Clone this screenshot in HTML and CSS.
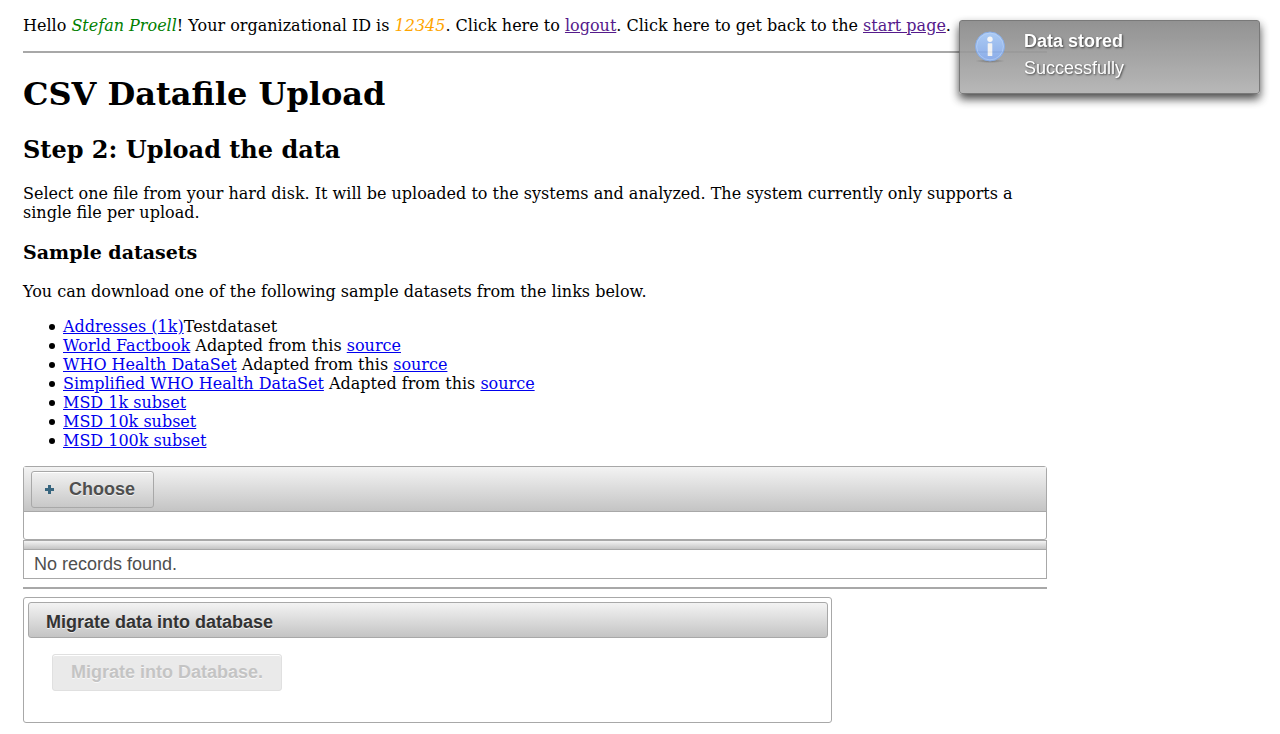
FILE: index.html
```html
<!DOCTYPE html>
<html lang="en">
<head>
<meta charset="utf-8">
<title>CSV Datafile Upload</title>
<link rel="stylesheet" href="styles.css">
</head>
<body>
<main class="content">
  <p class="greeting">Hello <em class="user-name">Stefan Proell</em>! Your organizational ID is <em class="org-id">12345</em>. Click here to <a class="visited" href="#logout">logout</a>. Click here to get back to the <a class="visited" href="#start">start page</a>.</p>
  <hr class="rule">
  <h1 class="title">CSV Datafile Upload</h1>
  <h2 class="step">Step 2: Upload the data</h2>
  <p class="text">Select one file from your hard disk. It will be uploaded to the systems and analyzed. The system currently only supports a single file per upload.</p>
  <h3 class="subtitle">Sample datasets</h3>
  <p class="text">You can download one of the following sample datasets from the links below.</p>
  <ul class="datasets">
    <li><a href="#addresses">Addresses (1k)</a>Testdataset</li>
    <li><a href="#factbook">World Factbook</a> Adapted from this <a href="#factbook-source">source</a></li>
    <li><a href="#who">WHO Health DataSet</a> Adapted from this <a href="#who-source">source</a></li>
    <li><a href="#who-simple">Simplified WHO Health DataSet</a> Adapted from this <a href="#who-simple-source">source</a></li>
    <li><a href="#msd-1k">MSD 1k subset</a></li>
    <li><a href="#msd-10k">MSD 10k subset</a></li>
    <li><a href="#msd-100k">MSD 100k subset</a></li>
  </ul>
  <section class="upload">
    <div class="upload-bar">
      <button class="button" type="button"><svg class="plus" viewBox="0 0 9 9" aria-hidden="true"><path d="M3 0h3v3h3v3h-3v3h-3v-3h-3v-3h3z" fill="#38667f"/></svg>Choose</button>
    </div>
    <div class="upload-files"></div>
  </section>
  <table class="records">
    <thead><tr><th></th></tr></thead>
    <tbody><tr><td>No records found.</td></tr></tbody>
  </table>
  <hr class="rule">
  <section class="panel">
    <h4 class="panel-title">Migrate data into database</h4>
    <div class="panel-body">
      <button class="button" type="button" disabled>Migrate into Database.</button>
    </div>
  </section>
</main>
<aside class="toast" role="status">
  <svg class="toast-icon" viewBox="0 0 32 32" aria-hidden="true">
    <defs>
      <linearGradient id="ball" x1="0" y1="0" x2="0" y2="1"><stop offset="0" stop-color="#a3c6f3"/><stop offset="1" stop-color="#80a4e6"/></linearGradient>
      <radialGradient id="shade"><stop offset="0" stop-color="#444" stop-opacity=".6"/><stop offset="1" stop-color="#444" stop-opacity="0"/></radialGradient>
    </defs>
    <ellipse cx="16" cy="30" rx="15" ry="2" fill="url(#shade)"/>
    <circle cx="16" cy="15.5" r="14.5" fill="url(#ball)" stroke="#7ba4e4"/>
    <circle cx="16" cy="15.5" r="13.4" fill="none" stroke="#b6d0f6" stroke-opacity=".6"/>
    <circle cx="16" cy="8.2" r="2.7" fill="#f5f5f5"/>
    <rect x="13.7" y="12.3" width="4.6" height="12.7" rx=".6" fill="#f1f1f1"/>
  </svg>
  <div class="toast-text">
    <strong>Data stored</strong>
    <span>Successfully</span>
  </div>
</aside>
</body>
</html>
```
FILE: styles.css
```css
* { box-sizing: border-box; }
body {
  margin: 0;
  background: #fff;
  color: #000;
  font: 16px/19px "DejaVu Serif", serif;
}
a { color: #0000ee; }
a.visited { color: #551a8b; }
.content { width: 80%; margin: 16px 23px 10px; }
.greeting { margin: 0 0 16px; }
.user-name { color: green; }
.org-id { color: orange; }
.rule { height: 2px; margin: 8px 0; border: 0; background: #a8a8a8; }
.title { margin: 22px 0; font-size: 32px; line-height: 38px; }
.step { margin: 22px 0 20px; font-size: 24px; line-height: 29px; }
.subtitle { margin: 19px 0; font-size: 19px; line-height: 22px; }
.text { margin: 0 0 16px; }
.datasets { margin: 0 0 16px; padding-left: 40px; list-style: none; }
.datasets li::before {
  content: "";
  display: inline-block;
  width: 6px;
  height: 6px;
  margin: 0 8px 0 -14px;
  border-radius: 50%;
  background: #000;
  vertical-align: 2px;
}
.upload, .records, .panel, .button, .toast {
  font-family: "Liberation Sans", Arial, sans-serif;
  font-size: 18px;
}
.upload { border: 1px solid #a8a8a8; border-radius: 3px; }
.upload-bar {
  padding: 4px 7px 3px;
  border-bottom: 1px solid #a8a8a8;
  background: linear-gradient(#f3f3f3, #c4c4c4);
}
.upload-files { height: 27px; }
.button {
  display: inline-flex;
  align-items: center;
  height: 37px;
  padding: 0 18px 2px;
  border: 1px solid #a8a8a8;
  border-radius: 3px;
  background: linear-gradient(#f1f1f1, #c8c8c8);
  box-shadow: inset 0 1px 0 #fff;
  color: #4f4f4f;
  font-weight: bold;
  line-height: 22px;
  text-shadow: 0 1px 0 rgba(255, 255, 255, .7);
  vertical-align: top;
}
.button:disabled { border-color: #e0e0e0; background: #eaeaea; color: #c4c4c4; }
.plus { width: 9px; height: 9px; margin: 2px 15px 0 -5px; }
.records {
  width: 100%;
  border-collapse: separate;
  border-spacing: 0;
  border: 1px solid #a8a8a8;
  color: #4f4f4f;
}
.records th {
  height: 9px;
  padding: 0;
  border-bottom: 1px solid #a8a8a8;
  background: linear-gradient(#f3f3f3, #c4c4c4);
}
.records td { padding: 3px 10px; line-height: 22px; }
.panel {
  width: 79%;
  padding: 4px 3px 4px 4px;
  border: 1px solid #a8a8a8;
  border-radius: 3px;
}
.panel-title {
  margin: 0;
  padding: 8px 17px 4px;
  border: 1px solid #a8a8a8;
  border-radius: 3px;
  background: linear-gradient(#f3f3f3, #c4c4c4);
  color: #333;
  font-size: 18px;
  line-height: 22px;
  text-shadow: 0 1px 0 rgba(255, 255, 255, .7);
}
.panel-body { padding: 16px 24px 27px; }
.toast {
  position: fixed;
  top: 20px;
  right: 20px;
  display: flex;
  gap: 18px;
  width: 301px;
  padding: 9px 14px 14px;
  border: 1px solid #6b6b6b;
  border-radius: 3px;
  background: linear-gradient(#878787, #b0b0b0);
  box-shadow: 0 5px 10px rgba(0, 0, 0, .8);
  color: #fff;
  opacity: .9;
  text-shadow: 1px 1px 2px rgba(40, 40, 40, .9);
}
.toast-icon { width: 32px; height: 32px; margin-top: 1px; }
.toast-text { display: flex; flex-direction: column; gap: 5px; line-height: 22px; }
```
